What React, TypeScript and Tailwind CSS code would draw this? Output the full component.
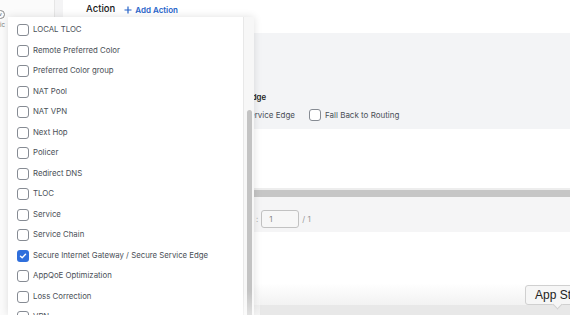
const options = [
  { label: "LOCAL TLOC", checked: false },
  { label: "Remote Preferred Color", checked: false },
  { label: "Preferred Color group", checked: false },
  { label: "NAT Pool", checked: false },
  { label: "NAT VPN", checked: false },
  { label: "Next Hop", checked: false },
  { label: "Policer", checked: false },
  { label: "Redirect DNS", checked: false },
  { label: "TLOC", checked: false },
  { label: "Service", checked: false },
  { label: "Service Chain", checked: false },
  { label: "Secure Internet Gateway / Secure Service Edge", checked: true },
  { label: "AppQoE Optimization", checked: false },
  { label: "Loss Correction", checked: false },
  { label: "VPN", checked: false },
];

function Box({ checked }: { checked?: boolean }) {
  if (checked) {
    return (
      <span className="flex items-center justify-center w-[12px] h-[12px] rounded-[3px] bg-[#2f6fdc] shrink-0">
        <svg width="8" height="8" viewBox="0 0 8 8" fill="none">
          <path d="M1.5 4.2 3.2 5.8 6.5 2.3" stroke="white" strokeWidth="1.4" strokeLinecap="round" strokeLinejoin="round" />
        </svg>
      </span>
    );
  }
  return <span className="block w-[12px] h-[12px] rounded-[3px] border-[1.5px] border-[#868b93] bg-white shrink-0" />;
}

export default function App() {
  return (
    <div className="relative w-[570px] h-[315px] overflow-hidden bg-white font-['Inter',sans-serif]">
      {/* page behind the dropdown */}
      <div className="flex h-full">
        <div className="w-[55px] h-full bg-[#fbfbfb] border-r border-[#e6e6e6] flex flex-col items-start">
          <span className="mt-[10px] -ml-[4px] w-[9px] h-[9px] rounded-full border border-[#888] flex items-center justify-center text-[5px] text-[#555]">v</span>
          <span className="mt-[3px] text-[6px] text-[#777] leading-none">ic</span>
        </div>
        <div className="w-[8px] h-full bg-[#f4f4f5]" />
        <div className="flex-1 flex flex-col">
          <div className="h-[33px] flex items-start pt-[2px] pl-[23px] gap-[9px]">
            <span className="text-[9.5px] font-medium text-[#1a1a1a]">Action</span>
            <span className="flex items-center gap-[3px] text-[8px] font-semibold text-[#2563c9] mt-[2px]">
              <svg width="8" height="8" viewBox="0 0 8 8"><path d="M4 0.5v7M0.5 4h7" stroke="#2563c9" strokeWidth="1.2" /></svg>
              Add Action
            </span>
          </div>
          <div className="h-[96px] bg-[#f3f4f6] flex flex-col justify-end pb-[8px]">
            <div className="w-[203px] text-right text-[7.8px] font-semibold text-[#1a1a1a] mb-[5px]">Secure Internet Gateway / Secure Service Edge</div>
            <div className="flex items-center">
              <span className="w-[232px] text-right text-[8px] text-[#4a4f57]">Secure Internet Gateway / Secure Service Edge</span>
              <span className="ml-[14px]"><Box /></span>
              <span className="ml-[4px] text-[8px] text-[#4a4f57]">Fall Back to Routing</span>
            </div>
          </div>
          <div className="h-[59px] bg-white" />
          <div className="h-[2px] bg-[#ededed]" />
          <div className="h-[7px] bg-[#c6c6c6]" />
          <div className="h-[35px] bg-[#f5f5f6] flex items-start pt-[13px] pl-[193px] gap-[3px]">
            <span className="text-[8px] text-[#aaa] leading-[18px]">:</span>
            <span className="w-[38px] h-[18px] rounded-[3px] border border-[#c2c2c2] bg-[#f7f7f7] text-[8px] text-[#888] flex items-center pl-[7px]">1</span>
            <span className="text-[8px] text-[#999] leading-[18px]">/ 1</span>
          </div>
          <div className="flex-1 bg-gradient-to-b from-white from-70% to-[#f2f2f2]" />
          <div className="h-[10px] bg-[#e8e8e8]" />
        </div>
      </div>

      {/* dropdown overlay */}
      <div className="absolute left-[8px] top-[17px] bottom-0 w-[246px] flex shadow-[0_0_8px_rgba(0,0,0,0.12)]">
        <div className="w-[235px] bg-white pt-[3px] pl-[9px] flex flex-col">
          {options.map((o, i) => (
            <div key={i} className="h-[20.5px] flex items-center gap-[4px] shrink-0">
              <Box checked={o.checked} />
              <span className="text-[7.8px] text-[#4a4f57] whitespace-nowrap">{o.label}</span>
            </div>
          ))}
        </div>
        <div className="w-[11px] bg-[#f7f7f7] border-l border-[#e8e8e8] flex justify-center pt-[93px]">
          <div className="w-[5px] h-full bg-[#c3c3c3] rounded-t-[3px]" />
        </div>
      </div>

      {/* bottom haze */}
      <div className="absolute left-[90px] bottom-0 w-[170px] h-[24px] bg-gradient-to-t from-white/50 to-transparent" />

      {/* tooltip */}
      <div className="absolute left-[525px] top-[285px] h-[20px] pl-[9px] pr-[10px] rounded-[3px] border border-[#d0d0d0] bg-[#f6f6f6] flex items-center text-[12px] text-[#222] whitespace-nowrap font-['Liberation_Sans',sans-serif]">
        App Store
      </div>
      <div className="absolute left-[554px] top-[301px] w-[7px] h-[7px] rotate-45 bg-[#f6f6f6] border-r border-b border-[#d0d0d0]" />
    </div>
  );
}
